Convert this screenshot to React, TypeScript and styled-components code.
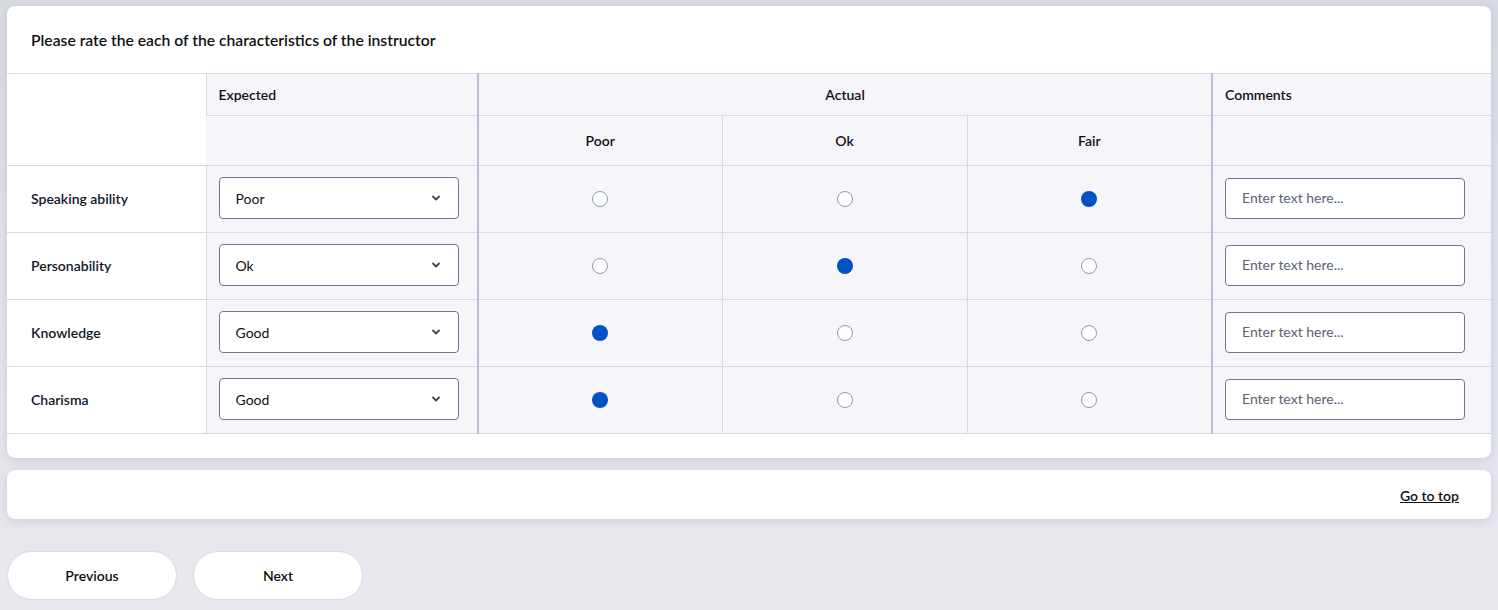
import React from "react";
import styled, { createGlobalStyle } from "styled-components";

const Global = createGlobalStyle`
  html, body { margin: 0; padding: 0; }
  body {
    background: linear-gradient(180deg, #d9dbe3 0%, #e3e4eb 60%, #e8e9ef 100%);
    min-height: 610px;
    font-family: Lato, "Open Sans", "Liberation Sans", sans-serif;
    color: #111827;
  }
`;

const Page = styled.div`
  padding: 6px 7px 10px 7px;
  display: flex;
  flex-direction: column;
  gap: 12px;
`;

const Card = styled.section`
  background: #fff;
  border-radius: 8px;
  box-shadow: 0 2px 8px rgba(120, 128, 160, 0.25);
  overflow: hidden;
`;

const Title = styled.h2`
  margin: 0;
  height: 67px;
  display: flex;
  align-items: center;
  padding: 0 24px;
  font-size: 15.7px;
  font-weight: 600;
  color: #111;
`;

const TableWrap = styled.div`
  padding-bottom: 24px;
`;

const Table = styled.table`
  width: 100%;
  border-collapse: collapse;
  table-layout: fixed;
  font-size: 14px;
`;

const Th = styled.th<{ $align?: string; $thick?: boolean; $blank?: boolean; $h: number }>`
  height: ${(p) => p.$h}px;
  padding: 0 12px;
  box-sizing: border-box;
  text-align: ${(p) => p.$align || "left"};
  font-weight: 600;
  background: ${(p) => (p.$blank ? "#fff" : "#f5f5fa")};
  border-top: 1px solid #d5dbe6;
  border-bottom: 1px solid #d5dbe6;
  border-left: ${(p) => (p.$thick ? "2px solid #b6c1d5" : "1px solid #d5dbe6")};
  &:first-child { border-left: none; }
  color: #111;
`;

const Td = styled.td<{ $thick?: boolean; $label?: boolean; $center?: boolean }>`
  height: 67px;
  box-sizing: border-box;
  padding: 0 ${(p) => (p.$label ? "24px" : "12px")};
  padding-bottom: 2px;
  background: ${(p) => (p.$label ? "#fff" : "#f5f5fa")};
  border-bottom: 1px solid #d5dbe6;
  border-left: ${(p) => (p.$thick ? "2px solid #b6c1d5" : "1px solid #d5dbe6")};
  &:first-child { border-left: none; }
  text-align: ${(p) => (p.$center ? "center" : "left")};
  font-weight: ${(p) => (p.$label ? 600 : 400)};
  vertical-align: middle;
`;

const SelectBox = styled.div`
  width: 240px;
  height: 42px;
  box-sizing: border-box;
  border: 1px solid #6b7a90;
  border-radius: 4px;
  background: #fff;
  display: flex;
  align-items: center;
  justify-content: space-between;
  padding: 0 17px 0 16px;
  font-size: 14px;
  color: #111;
`;

const TextBox = styled.div`
  width: 240px;
  height: 41px;
  box-sizing: border-box;
  border: 1px solid #6b7a90;
  border-radius: 4px;
  background: #fff;
  display: flex;
  align-items: center;
  padding: 0 16px 1px;
  font-size: 14px;
  color: #5b6474;
`;

const Radio = styled.span<{ $on?: boolean }>`
  display: inline-block;
  width: 16px;
  height: 16px;
  box-sizing: border-box;
  border-radius: 50%;
  border: ${(p) => (p.$on ? "none" : "1.5px solid #8e9bb0")};
  background: ${(p) => (p.$on ? "#0052c4" : "#fff")};
  vertical-align: middle;
`;

const Footer = styled.div`
  height: 49px;
  display: flex;
  align-items: center;
  justify-content: flex-end;
  padding: 0 32px;
`;

const TopLink = styled.a`
  font-size: 14px;
  font-weight: 600;
  color: #111;
  text-decoration: underline;
  margin-top: 1px;
`;

const Buttons = styled.div`
  display: flex;
  gap: 16px;
  margin-top: 20px;
`;

const PillButton = styled.button`
  width: 170px;
  height: 49px;
  border-radius: 25px;
  border: 1px solid #d6dae6;
  background: #fff;
  font-family: inherit;
  font-size: 14px;
  font-weight: 600;
  color: #111;
`;

const Chevron = () => (
  <svg width="10" height="10" viewBox="0 0 10 10">
    <path d="M2 3.5 L5 6.5 L8 3.5" fill="none" stroke="#3b4658" strokeWidth="1.8" strokeLinecap="round" strokeLinejoin="round" />
  </svg>
);

const rows = [
  { label: "Speaking ability", expected: "Poor", actual: 2 },
  { label: "Personability", expected: "Ok", actual: 1 },
  { label: "Knowledge", expected: "Good", actual: 0 },
  { label: "Charisma", expected: "Good", actual: 0 },
];

export default function App() {
  return (
    <>
      <Global />
      <Page>
        <Card>
          <Title>Please rate the each of the characteristics of the instructor</Title>
          <TableWrap>
            <Table>
              <colgroup>
                <col style={{ width: 199 }} />
                <col style={{ width: 272 }} />
                <col style={{ width: 244 }} />
                <col style={{ width: 245 }} />
                <col style={{ width: 245 }} />
                <col style={{ width: 279 }} />
              </colgroup>
              <thead>
                <tr>
                  <Th $h={42} $blank rowSpan={2} />
                  <Th $h={42}>Expected</Th>
                  <Th $h={42} $thick colSpan={3} $align="center">Actual</Th>
                  <Th $h={42} $thick>Comments</Th>
                </tr>
                <tr>
                  <Th $h={50} />
                  <Th $h={50} $thick $align="center">Poor</Th>
                  <Th $h={50} $align="center">Ok</Th>
                  <Th $h={50} $align="center">Fair</Th>
                  <Th $h={50} $thick />
                </tr>
              </thead>
              <tbody>
                {rows.map((r) => (
                  <tr key={r.label}>
                    <Td $label>{r.label}</Td>
                    <Td>
                      <SelectBox>
                        <span>{r.expected}</span>
                        <Chevron />
                      </SelectBox>
                    </Td>
                    {[0, 1, 2].map((i) => (
                      <Td key={i} $center $thick={i === 0}>
                        <Radio $on={r.actual === i} />
                      </Td>
                    ))}
                    <Td $thick>
                      <TextBox>Enter text here...</TextBox>
                    </Td>
                  </tr>
                ))}
              </tbody>
            </Table>
          </TableWrap>
        </Card>
        <Card>
          <Footer>
            <TopLink href="#">Go to top</TopLink>
          </Footer>
        </Card>
        <Buttons>
          <PillButton>Previous</PillButton>
          <PillButton>Next</PillButton>
        </Buttons>
      </Page>
    </>
  );
}
